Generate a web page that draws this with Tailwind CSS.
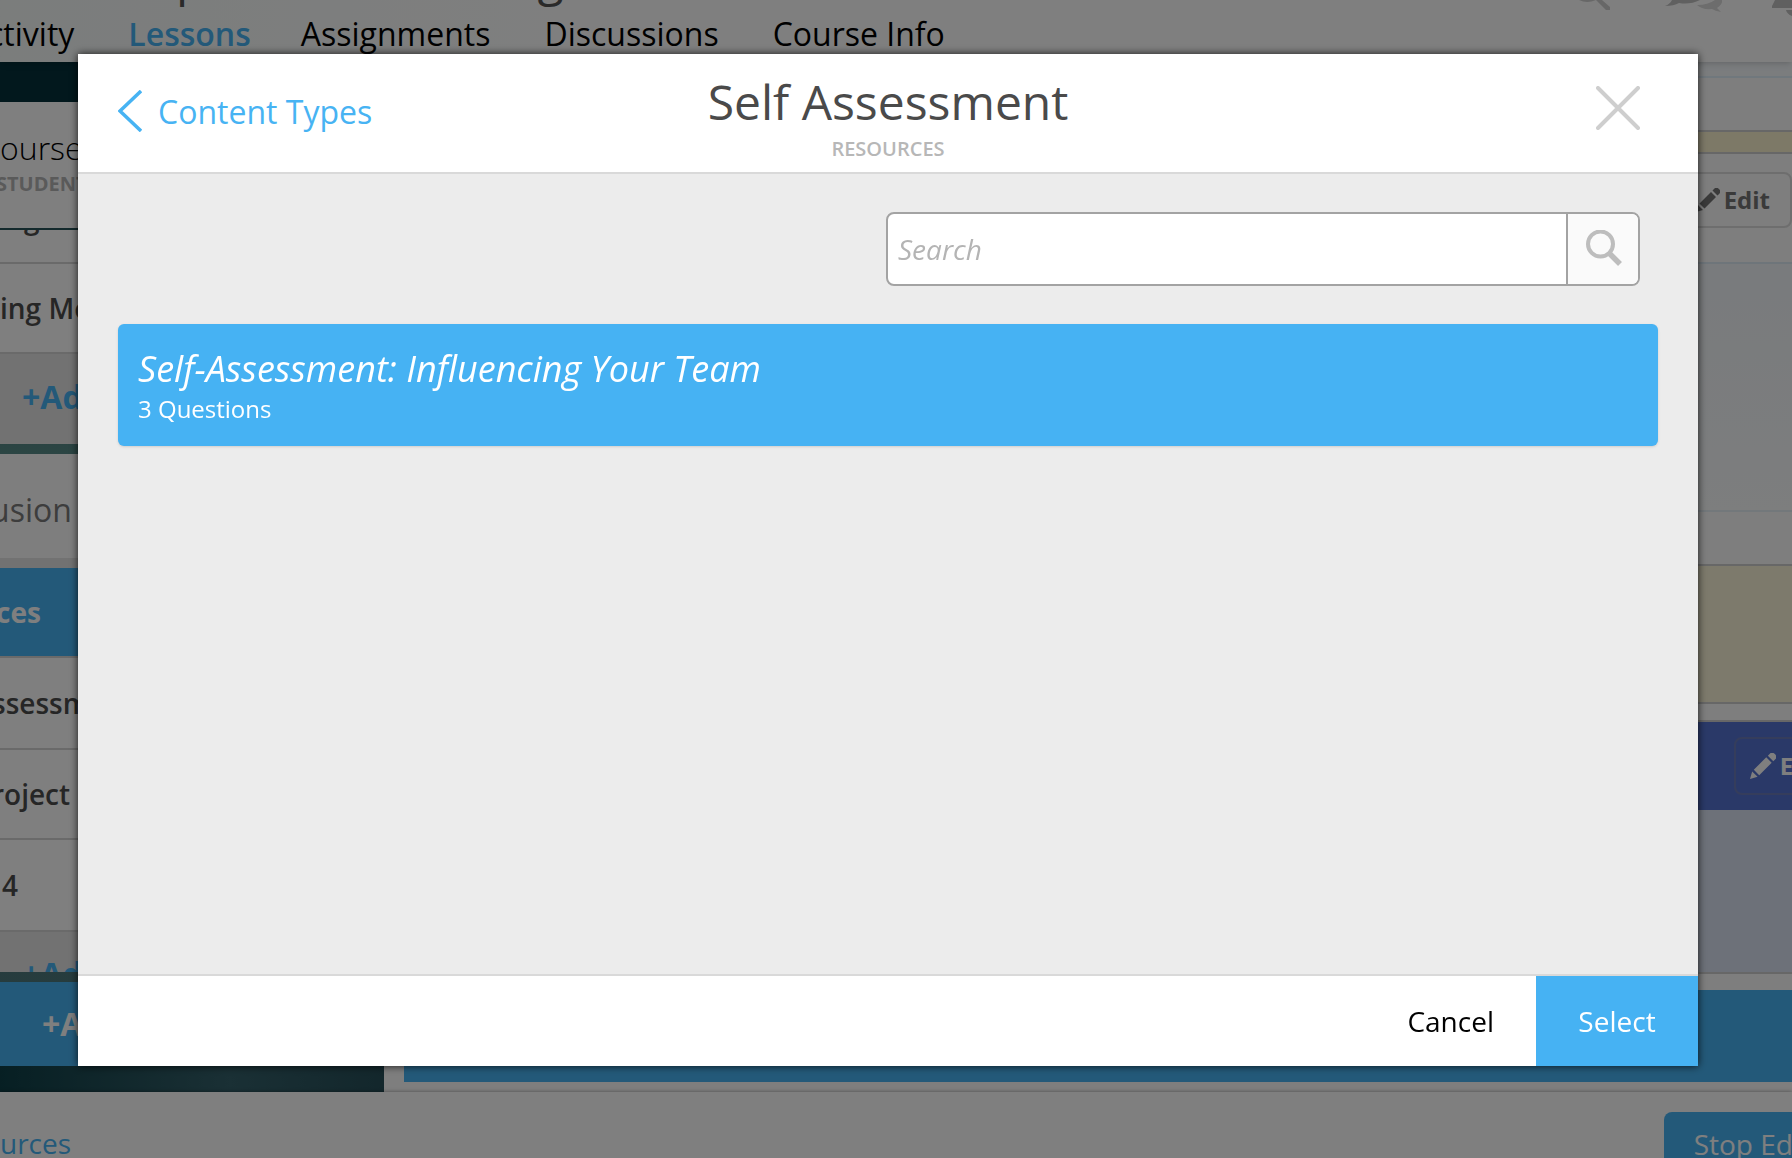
<!DOCTYPE html>
<html lang="en">
<head>
<meta charset="utf-8">
<meta name="viewport" content="width=device-width, initial-scale=1">
<title>Self Assessment</title>
<script src="https://cdn.jsdelivr.net/npm/@tailwindcss/browser@4"></script>
</head>
<body class="h-screen overflow-hidden font-['Open_Sans',sans-serif] text-black">

<!-- Course page behind the dialog -->
<div class="flex h-screen flex-col overflow-hidden bg-white whitespace-nowrap" inert>
  <header class="relative z-10 flex h-[62px] shrink-0 justify-between overflow-hidden bg-white bg-linear-to-r from-[#f6faf9] to-white to-35% shadow-md">
    <div class="flex flex-col">
      <div class="flex h-3 items-end gap-[332px] pl-[176px] text-5xl leading-[68px] font-medium text-[#555]"><span>p</span><span>g</span></div>
      <nav class="-ml-3 flex gap-[54px] text-[32px] leading-[44px]">
        <a href="#">ctivity</a>
        <a href="#" class="-mr-1 font-semibold text-[#47b3f3]">Lessons</a>
        <a href="#">Assignments</a>
        <a href="#">Discussions</a>
        <a href="#">Course Info</a>
      </nav>
    </div>
    <svg class="h-4 w-[216px]" viewBox="0 0 216 16" fill="#c0c0c0" aria-hidden="true">
      <path d="M3 0q8 4 17 0zM20 0h6l8 7v3h-4z" fill="#cfcfcf"/>
      <path d="M96 0q-2 4-7 6 9 0 14-3 11 2 21-3z"/>
      <path d="M121 5q11 0 18-5h7q1 4-5 8l4 4q-6-1-9-3-10 1-15-4z" fill="#dadada"/>
      <path d="M199 0h17v8h-20V6zM210 10h6v6q-5-2-6-6z"/>
    </svg>
  </header>

  <div class="flex min-h-0 flex-1">
    <aside class="flex w-96 shrink-0 flex-col overflow-hidden bg-linear-to-b from-[#04303a] via-[#5c908c] via-40% to-[#4a7378]">
      <div class="mb-[2px] shrink-0 border-t-40 border-[#04303a]">
        <div class="flex h-[126px] flex-col overflow-hidden bg-white pt-6">
          <span class="text-[32px] font-light leading-[44px]">ourse</span>
          <span class="-ml-1 text-xl font-bold leading-7 text-[#b5b5b5]">STUDENT</span>
        </div>
      </div>
      <ul class="text-[28px] font-semibold text-[#4c4c4c]">
        <li class="flex h-[34px] items-start overflow-hidden border-b-2 border-[#d4d4d4] bg-white pl-6 leading-none"><span class="-mt-[26px]">g</span></li>
        <li class="flex h-[90px] items-center border-b-2 border-[#d4d4d4] bg-white">ing Mo</li>
      </ul>
      <button type="button" class="h-[90px] shrink-0 bg-[#e4e4e4] pb-1 pl-[22px] text-left text-[32px] font-bold text-[#47b3f3]">+Ad</button>
      <h2 class="mt-[10px] flex h-[114px] shrink-0 items-center border-b-10 border-[#e4e4e4] bg-[#fdfdfd] pt-2 text-[32px] text-[#7a7a7a]"><span class="-ml-[10px]">usion</span></h2>
      <ul class="text-[28px] font-semibold text-[#4c4c4c]">
        <li class="flex h-[90px] items-center border-b-2 border-[#d4d4d4] bg-[#47b3f3] font-bold text-white"><span class="-ml-1">ces</span></li>
        <li class="flex h-[92px] items-center border-b-2 border-[#d4d4d4] bg-white"><span class="-ml-2">ssessm</span></li>
        <li class="flex h-[90px] items-center border-b-2 border-[#d4d4d4] bg-white"><span class="-ml-2">roject</span></li>
        <li class="flex h-[92px] items-center border-b-2 border-[#d4d4d4] bg-white pl-[2px]">4</li>
      </ul>
      <div class="h-10 shrink-0 overflow-hidden bg-[#e4e4e4] pl-[22px] pt-5 text-[32px] font-bold leading-[44px] text-[#47b3f3]">+Ad</div>
      <button type="button" class="mt-[10px] h-[84px] shrink-0 bg-[#47b3f3] pl-[42px] text-left text-[32px] font-bold text-white">+A</button>
      <div class="h-[26px] shrink-0 bg-linear-to-r from-[#0e3f47] via-[#34606a] via-60% to-[#264e58]"></div>
    </aside>

    <main class="flex min-w-0 flex-1 flex-col overflow-hidden bg-[#fcfcfc]">
      <div class="h-4 shrink-0 border-b-2 border-[#e0f0fb] bg-[#f6fafd]"></div>
      <div class="h-[54px] shrink-0 border-b-2 border-[#cfcfcf]"></div>
      <div class="h-[22px] shrink-0 border-b-2 border-[#cfcfcf] bg-[#fbf2cf]"></div>
      <div class="flex h-[110px] shrink-0 items-start justify-end border-b-2 border-[#dceaf5] pt-[18px]">
        <button type="button" class="flex h-14 items-center gap-1 rounded-lg border-2 border-[#dcdcdc] px-5 text-2xl font-bold text-[#747474]">
          <svg class="size-6" viewBox="0 0 24 24" fill="currentColor" aria-hidden="true"><path d="M0 24l2-7 5 5zM3.500 15.500 15 4l5 5L8.500 20.500zM16.500 2.500 19 0q2-1 4 1t1 4l-2.500 2.500z"/></svg>
          Edit
        </button>
      </div>
      <div class="h-[248px] shrink-0 border-b-2 border-[#e6f0f7] bg-linear-to-b from-[#f2f6fa] to-[#fafcfd]"></div>
      <div class="h-[54px] shrink-0 border-b-2 border-[#cfcfcf]"></div>
      <div class="h-[138px] shrink-0 border-b-2 border-[#cfcfcf] bg-[#fbf5d8]"></div>
      <div class="h-[18px] shrink-0 border-b-2 border-[#cfcfcf]"></div>
      <div class="flex h-[88px] shrink-0 items-center justify-end overflow-hidden bg-[#5573d1]">
        <button type="button" class="-mr-[50px] flex h-[58px] items-center gap-1 rounded-lg border-2 border-[#6a7bb8] px-[14px] text-2xl font-bold text-white">
          <svg class="size-[26px]" viewBox="0 0 24 24" fill="currentColor" aria-hidden="true"><path d="M0 24l2-7 5 5zM3.500 15.500 15 4l5 5L8.500 20.500zM16.500 2.500 19 0q2-1 4 1t1 4l-2.500 2.500z"/></svg>
          Edit
        </button>
      </div>
      <div class="h-[164px] shrink-0 border-b-2 border-[#cfcfcf] bg-[#dbe3f3]"></div>
      <div class="ml-5 mt-4 h-[92px] shrink-0 bg-[#47b3f3]"></div>
    </main>
  </div>

  <footer class="relative z-10 flex h-[66px] shrink-0 items-start justify-between overflow-hidden bg-white pt-5 text-[28px] leading-[62px] shadow-[0_0_4px_#0006]">
    <a href="#" class="text-[#47b3f3]">urces</a>
    <button type="button" class="-mr-12 h-16 rounded-lg bg-[#47b3f3] px-[30px] text-white">Stop Edit</button>
  </footer>
</div>

<!-- Overlay and dialog -->
<div class="fixed inset-0 z-20 flex bg-black/50 pt-[54px] pr-[94px] pb-[92px] pl-[78px]">
  <section role="dialog" aria-modal="true" aria-labelledby="dialog-title" class="flex min-w-0 flex-1 flex-col bg-[#ececec] shadow-[0_0_8px_#000c]">
    <header class="grid h-[120px] shrink-0 grid-cols-[1fr_auto_1fr] border-b-2 border-[#d9d9d9] bg-white">
      <a href="#" class="mt-9 flex h-[42px] items-center gap-4 justify-self-start pl-10 text-[32px] leading-[46px] font-medium text-[#47b3f3]">
        <svg class="h-[42px] w-6" viewBox="0 0 24 42" fill="none" stroke="currentColor" stroke-width="3.500" aria-hidden="true"><path d="M23 1 2 21l21 20"/></svg>
        <span class="pt-[2px]">Content Types</span>
      </a>
      <div class="pt-4 text-center">
        <h1 id="dialog-title" class="text-5xl leading-[64px] text-[#4a4a4a]">Self Assessment</h1>
        <p class="text-xl leading-[30px] font-semibold text-[#b7b7b7]">RESOURCES</p>
      </div>
      <button type="button" aria-label="Close" class="mt-8 mr-[58px] self-start justify-self-end text-[#cecece]">
        <svg class="size-11" viewBox="0 0 44 44" fill="none" stroke="currentColor" stroke-width="4" stroke-linecap="round" aria-hidden="true"><path d="m2 2 40 40M42 2 2 42"/></svg>
      </button>
    </header>

    <div class="min-h-0 flex-1 px-10 pt-[38px]">
      <form role="search" class="mr-[18px] ml-auto flex h-[74px] w-[754px] max-w-full overflow-hidden rounded-lg border-2 border-[#a3a3a3] bg-white">
        <input type="search" aria-label="Search" placeholder="Search" class="min-w-0 flex-1 px-[10px] text-[28px] italic outline-none placeholder:text-[#b4b4b4]">
        <button type="button" aria-label="Run search" class="flex w-[72px] shrink-0 justify-center border-l-2 border-[#a3a3a3] bg-[#fafafa] pt-4 pl-[2px] text-[#bdbdbd]">
          <svg class="size-9" viewBox="0 0 36 36" fill="none" stroke="currentColor" aria-hidden="true"><circle cx="14.500" cy="14" r="12.500" stroke-width="4"/><path d="m23 23 11 11" stroke-width="5.500"/></svg>
        </button>
      </form>
      <ul class="mt-[38px]">
        <li>
          <button type="button" class="flex h-[122px] w-full flex-col rounded-md bg-[#46b2f3] px-5 pt-[21px] text-left text-white shadow-sm">
            <span class="text-4xl leading-[48px] font-medium italic">Self-Assessment: Influencing Your Team</span>
            <span class="text-2xl leading-8 font-medium">3 Questions</span>
          </button>
        </li>
      </ul>
    </div>

    <footer class="flex h-[92px] shrink-0 justify-end border-t-2 border-[#d9d9d9] bg-white text-[28px]">
      <button type="button" class="px-[42px]">Cancel</button>
      <button type="button" class="w-[162px] bg-[#46b2f3] font-medium text-white">Select</button>
    </footer>
  </section>
</div>
</body>
</html>
